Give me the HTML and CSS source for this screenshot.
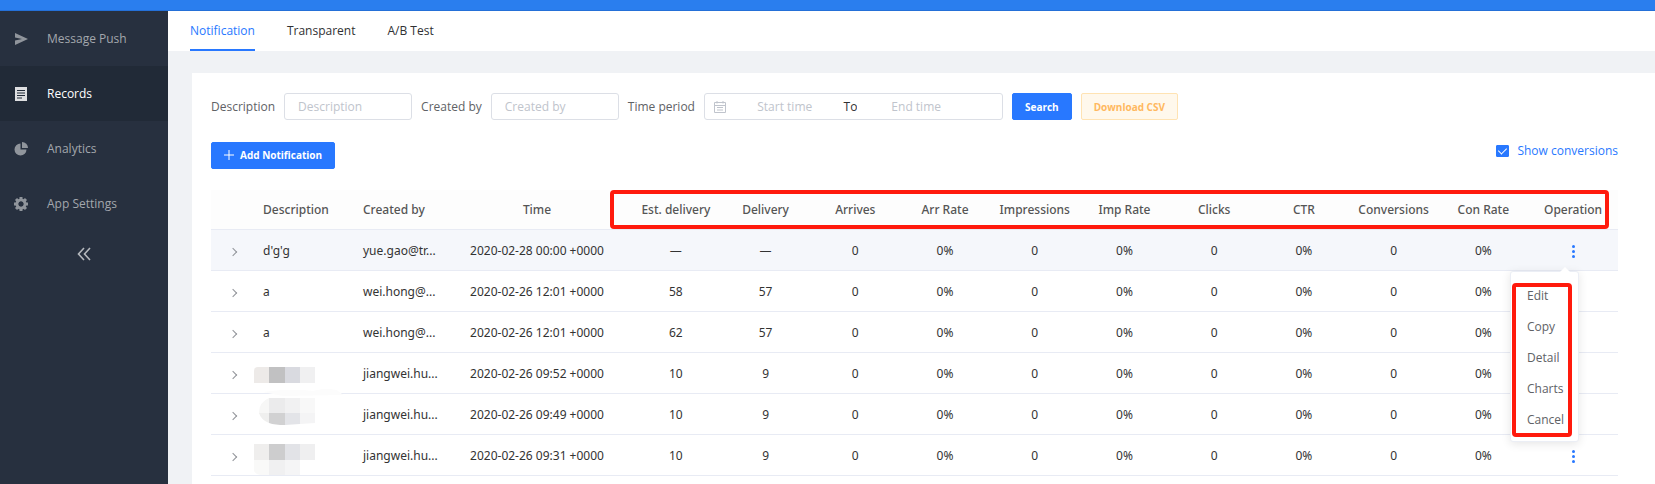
FILE: index.html
```html
<!DOCTYPE html>
<html lang="en">
<head>
    <meta charset="UTF-8">
    <title>Records - Notification</title>
    <link rel="stylesheet" href="styles.css">
</head>
<body>

<header class="topbar"></header>

<div class="layout">
    <nav class="sidebar">
        <a href="#" class="menu-item">
            <svg class="menu-icon" viewBox="0 0 14 14"><path d="M1 1l13 6-13 6V8.500l7-1.500-7-1.500z" fill="currentColor"/></svg>
            Message Push
        </a>
        <a href="#" class="menu-item active">
            <svg class="menu-icon" viewBox="0 0 14 14"><path d="M1 0h12v14H1z" fill="currentColor"/><path d="M3 3.500h8M3 6h8M3 8.500h8M3 11h5" stroke="#212a37"/></svg>
            Records
        </a>
        <a href="#" class="menu-item">
            <svg class="menu-icon" viewBox="0 0 14 14"><path d="M6.500 1.500v6h6a6 6 0 1 1-6-6z" fill="currentColor"/><path d="M8 0a6 6 0 0 1 6 6H8z" fill="currentColor"/></svg>
            Analytics
        </a>
        <a href="#" class="menu-item">
            <svg class="menu-icon" viewBox="0 0 14 14"><circle cx="7" cy="7" r="4" fill="none" stroke="currentColor" stroke-width="3"/><path d="M7 0v2.500M7 11.500V14M0 7h2.500M11.500 7H14M2 2l2 2M10 10l2 2M12 2l-2 2M4 10l-2 2" stroke="currentColor" stroke-width="3"/><circle cx="7" cy="7" r="2.400" fill="#27303f"/></svg>
            App Settings
        </a>
        <button class="collapse" aria-label="Collapse menu">
            <svg width="14" height="14" viewBox="0 0 14 14"><path d="M7 1L1.500 7 7 13M13 1L7.500 7 13 13" fill="none" stroke="currentColor" stroke-width="1.600"/></svg>
        </button>
    </nav>

    <main class="main">
        <div class="tabs">
            <a href="#" class="tab active">Notification</a>
            <a href="#" class="tab">Transparent</a>
            <a href="#" class="tab">A/B Test</a>
        </div>

        <section class="card">
            <form class="filters">
                <label for="description">Description</label>
                <input class="field" type="text" id="description" placeholder="Description">
                <label for="created">Created by</label>
                <input class="field" type="text" id="created" placeholder="Created by">
                <label for="start">Time period</label>
                <div class="range">
                    <svg width="12" height="12" viewBox="0 0 12 12" fill="none" stroke="#c0c4cc"><path d="M.5 1.500h11v10H.5zM.5 4.500h11M3 0v2.500M9 0v2.500M3 6.500h6M3 9h6"/></svg>
                    <input type="text" id="start" placeholder="Start time">
                    <span>To</span>
                    <input type="text" id="end" placeholder="End time" aria-label="End time">
                </div>
                <button type="button" class="btn primary">Search</button>
                <button type="button" class="btn warning">Download CSV</button>
            </form>

            <div class="actions">
                <button class="btn primary add">
                    <svg width="10" height="10" viewBox="0 0 10 10"><path d="M5 0v10M0 5h10" stroke="#fff"/></svg>
                    Add Notification
                </button>
                <label class="show"><input type="checkbox" checked> Show conversions</label>
            </div>

            <div class="table-wrap">
                <table>
                    <colgroup>
                        <col class="col-expand"><col class="col-desc"><col class="col-created"><col class="col-time">
                        <col span="11">
                    </colgroup>
                    <thead>
                        <tr>
                            <th></th>
                            <th class="left">Description</th>
                            <th class="left">Created by</th>
                            <th>Time</th>
                            <th>Est. delivery</th>
                            <th>Delivery</th>
                            <th>Arrives</th>
                            <th>Arr Rate</th>
                            <th>Impressions</th>
                            <th>Imp Rate</th>
                            <th>Clicks</th>
                            <th>CTR</th>
                            <th>Conversions</th>
                            <th>Con Rate</th>
                            <th>Operation</th>
                        </tr>
                    </thead>
                    <tbody>
                        <tr class="hover">
                            <td><button class="expand" aria-label="Expand"></button></td>
                            <td class="left">d'g'g</td>
                            <td class="left">yue.gao@tr...</td>
                            <td>2020-02-28 00:00 +0000</td>
                            <td>—</td><td>—</td><td>0</td><td>0%</td><td>0</td><td>0%</td><td>0</td><td>0%</td><td>0</td><td>0%</td>
                            <td class="operation">
                                <button class="more" aria-label="More"><i></i><i></i><i></i></button>
                                <div class="dropdown">
                                    <a href="#">Edit</a>
                                    <a href="#">Copy</a>
                                    <a href="#">Detail</a>
                                    <a href="#">Charts</a>
                                    <a href="#">Cancel</a>
                                    <div class="mark mark-menu"></div>
                                </div>
                            </td>
                        </tr>
                        <tr>
                            <td><button class="expand" aria-label="Expand"></button></td>
                            <td class="left">a</td>
                            <td class="left">wei.hong@...</td>
                            <td>2020-02-26 12:01 +0000</td>
                            <td>58</td><td>57</td><td>0</td><td>0%</td><td>0</td><td>0%</td><td>0</td><td>0%</td><td>0</td><td>0%</td>
                            <td><button class="more" aria-label="More"><i></i><i></i><i></i></button></td>
                        </tr>
                        <tr>
                            <td><button class="expand" aria-label="Expand"></button></td>
                            <td class="left">a</td>
                            <td class="left">wei.hong@...</td>
                            <td>2020-02-26 12:01 +0000</td>
                            <td>62</td><td>57</td><td>0</td><td>0%</td><td>0</td><td>0%</td><td>0</td><td>0%</td><td>0</td><td>0%</td>
                            <td><button class="more" aria-label="More"><i></i><i></i><i></i></button></td>
                        </tr>
                        <tr>
                            <td><button class="expand" aria-label="Expand"></button></td>
                            <td class="masked">
                                <svg class="mosaic" width="92" height="46" viewBox="0 0 92 46">
                                    <path d="M10 39q30-4 50-1 22-6 30 4l-60 1z" fill="#fcfcfc"/>
                                    <path d="M5 14h12v16H1V18q0-4 4-4z" fill="#edeae8"/>
                                    <path d="M16 14h16v16H16z" fill="#c1c1c2"/>
                                    <path d="M32 14h15v16H32z" fill="#d9dae0"/>
                                    <path d="M47 14h15v16H47z" fill="#f0f0f1"/>
                                </svg>
                            </td>
                            <td class="left">jiangwei.hu...</td>
                            <td>2020-02-26 09:52 +0000</td>
                            <td>10</td><td>9</td><td>0</td><td>0%</td><td>0</td><td>0%</td><td>0</td><td>0%</td><td>0</td><td>0%</td>
                            <td><button class="more" aria-label="More"><i></i><i></i><i></i></button></td>
                        </tr>
                        <tr>
                            <td><button class="expand" aria-label="Expand"></button></td>
                            <td class="masked">
                                <svg class="mosaic" width="92" height="40" viewBox="0 0 92 40">
                                    <path d="M16 4v15H6q0-11 10-15z" fill="#f7f7f6"/>
                                    <path d="M16 4h16v15H16z" fill="#ebebec"/>
                                    <path d="M32 4h15v15H32z" fill="#f1f1f2"/>
                                    <path d="M47 4h15v15H47z" fill="#f8f8f8"/>
                                    <path d="M6 19h10v10q-8-3-10-10z" fill="#efefee"/>
                                    <path d="M16 19h16v12q-10 0-16-2z" fill="#d1d1d2"/>
                                    <path d="M32 19h15v11l-15 1z" fill="#e3e4e8"/>
                                    <path d="M47 19h15v10l-15 1z" fill="#f4f4f5"/>
                                </svg>
                            </td>
                            <td class="left">jiangwei.hu...</td>
                            <td>2020-02-26 09:49 +0000</td>
                            <td>10</td><td>9</td><td>0</td><td>0%</td><td>0</td><td>0%</td><td>0</td><td>0%</td><td>0</td><td>0%</td>
                            <td><button class="more" aria-label="More"><i></i><i></i><i></i></button></td>
                        </tr>
                        <tr>
                            <td><button class="expand" aria-label="Expand"></button></td>
                            <td class="masked">
                                <svg class="mosaic" width="92" height="40" viewBox="0 0 92 40">
                                    <path d="M1 9h15v16H1z" fill="#efeeed"/>
                                    <path d="M16 9h16v16H16z" fill="#cdcdce"/>
                                    <path d="M32 9h15v16H32z" fill="#e2e3e7"/>
                                    <path d="M47 9h15v16H47z" fill="#efeff0"/>
                                    <path d="M1 25h15v15H9q-6 0-8-4z" fill="#f9f9f8"/>
                                    <path d="M16 25h16v15H16z" fill="#f0f0f1"/>
                                    <path d="M32 25h15v15H32z" fill="#f5f5f6"/>
                                </svg>
                            </td>
                            <td class="left">jiangwei.hu...</td>
                            <td>2020-02-26 09:31 +0000</td>
                            <td>10</td><td>9</td><td>0</td><td>0%</td><td>0</td><td>0%</td><td>0</td><td>0%</td><td>0</td><td>0%</td>
                            <td><button class="more" aria-label="More"><i></i><i></i><i></i></button></td>
                        </tr>
                    </tbody>
                </table>
                <div class="mark mark-head"></div>
            </div>
        </section>
    </main>
</div>

</body>
</html>
```
FILE: styles.css
```css
* {
    box-sizing: border-box;
}

body {
    margin: 0;
    min-height: 100vh;
    display: flex;
    flex-direction: column;
    font-family: "Open Sans", "Noto Sans", sans-serif;
    font-size: 12px;
    line-height: 20px;
    color: #333;
    background-color: #f0f2f5;
}

a {
    color: inherit;
    text-decoration: none;
}

button,
input {
    font-family: inherit;
    font-size: 12px;
}

button {
    cursor: pointer;
}

.topbar {
    height: 11px;
    background-color: #2a7eee;
    border-bottom: 1px solid #2470d8;
}

.layout {
    flex: 1;
    display: flex;
}

/* sidebar */
.sidebar {
    flex: 0 0 168px;
    background-color: #27303f;
    color: #a3a7ad;
}

.menu-item {
    display: flex;
    align-items: center;
    gap: 19px;
    height: 55px;
    padding-left: 14px;
    font-weight: 500;
}

.menu-item.active {
    color: #fff;
    background-color: #212a37;
}

.menu-icon {
    width: 14px;
    height: 14px;
    opacity: 0.85;
}

.collapse {
    display: block;
    margin: 16px auto 0;
    padding: 0;
    border: none;
    background: none;
    color: #b5b8bd;
}

/* content */
.main {
    flex: 1;
    min-width: 0;
    display: flex;
    flex-direction: column;
}

.tabs {
    display: flex;
    gap: 32px;
    height: 40px;
    padding-left: 22px;
    background-color: #fff;
}

.tab {
    line-height: 40px;
    color: #303133;
}

.tab.active {
    color: #2878ff;
    border-bottom: 2px solid #2878ff;
}

.card {
    flex: 1;
    margin: 22px 0 0 24px;
    padding: 20px 37px 8px 19px;
    background-color: #fff;
}

.filters {
    display: flex;
    align-items: center;
    gap: 9px;
    color: #606266;
}

.field,
.range {
    height: 27px;
    border: 1px solid #dcdfe6;
    border-radius: 3px;
}

.field {
    width: 128px;
    padding: 0 13px;
}

::placeholder {
    color: #c0c4cc;
}

.range {
    display: flex;
    align-items: center;
    width: 299px;
    padding: 0 27px 0 9px;
    color: #303133;
}

.range input {
    flex: 1;
    min-width: 0;
    padding: 0;
    border: none;
    text-align: center;
}

.btn {
    height: 27px;
    padding: 0 12px;
    border: 1px solid;
    border-radius: 2px;
    font-size: 10px;
    font-weight: 700;
}

.primary {
    color: #fff;
    background-color: #2878ff;
    border-color: #2878ff;
}

.warning {
    color: #ffb860;
    background-color: #fff8ec;
    border-color: #ffe3b3;
}

.add {
    display: flex;
    align-items: center;
    gap: 6px;
}

.actions {
    display: flex;
    align-items: center;
    justify-content: space-between;
    margin-top: 21px;
}

.show {
    display: flex;
    align-items: center;
    gap: 8px;
    padding-bottom: 8px;
    color: #2878ff;
}

.show input {
    appearance: none;
    display: flex;
    justify-content: center;
    width: 13px;
    height: 12px;
    margin: 0;
    border: 1px solid #2878ff;
    border-radius: 1px;
}

.show input:checked {
    background-color: #2878ff;
}

.show input:checked::after {
    content: "";
    width: 4px;
    height: 7px;
    border-right: 1px solid #fff;
    border-bottom: 1px solid #fff;
    transform: rotate(45deg);
}

/* table */
.table-wrap {
    position: relative;
    margin-top: 21px;
}

table {
    width: 100%;
    table-layout: fixed;
    border-collapse: separate;
    border-spacing: 0;
    font-family: "Noto Sans", "Open Sans", sans-serif;
}

.col-expand {
    width: 42px;
}

.col-desc {
    width: 100px;
}

.col-created {
    width: 90px;
}

.col-time {
    width: 188px;
}

th,
td {
    height: 41px;
    padding: 2px 0 0;
    text-align: center;
    white-space: nowrap;
    border-bottom: 1px solid #e8ebf4;
}

th {
    height: 40px;
    padding: 0;
    font-weight: 500;
    color: #555;
    background-color: #fdfdfd;
}

.left {
    padding-left: 10px;
    text-align: left;
}

.hover td {
    background-color: #f5f7fb;
}

.expand {
    width: 12px;
    height: 8px;
    padding: 0 0 0 4px;
    border: none;
    background: none;
    vertical-align: middle;
}

.expand::before {
    content: "";
    display: block;
    width: 5px;
    height: 5px;
    border-top: 1px solid #909399;
    border-right: 1px solid #909399;
    transform: rotate(45deg);
}

.more {
    display: inline-flex;
    flex-direction: column;
    gap: 2px;
    padding: 2px;
    border: none;
    background: none;
    vertical-align: middle;
}

.more i {
    width: 3px;
    height: 3px;
    border-radius: 50%;
    background-color: #2878ff;
}

.masked,
.operation {
    position: relative;
}

.mosaic {
    position: absolute;
    top: 0;
    left: 0;
    z-index: 1;
}

/* operation menu */
.dropdown {
    position: absolute;
    top: 41px;
    right: 39px;
    z-index: 2;
    width: 69px;
    padding: 8px 0 6px;
    text-align: left;
    font-family: "Open Sans", "Noto Sans", sans-serif;
    background-color: #fff;
    border: 1px solid #ebeef5;
    border-radius: 3px;
    box-shadow: 0 2px 10px rgba(0, 0, 0, 0.1);
}

.dropdown::before {
    content: "";
    position: absolute;
    top: -5px;
    right: 8px;
    border: 5px solid transparent;
    border-top: none;
    border-bottom-color: #fff;
}

.dropdown a {
    display: block;
    padding-left: 16px;
    line-height: 31px;
    color: #606266;
}

/* red frames */
.mark {
    position: absolute;
    border: 4px solid #ff1a0d;
    border-radius: 4px;
    pointer-events: none;
}

.mark-head {
    top: 0;
    left: 399px;
    right: 9px;
    height: 39px;
}

.mark-menu {
    top: 11px;
    bottom: 4px;
    left: 1px;
    right: 6px;
}
```
